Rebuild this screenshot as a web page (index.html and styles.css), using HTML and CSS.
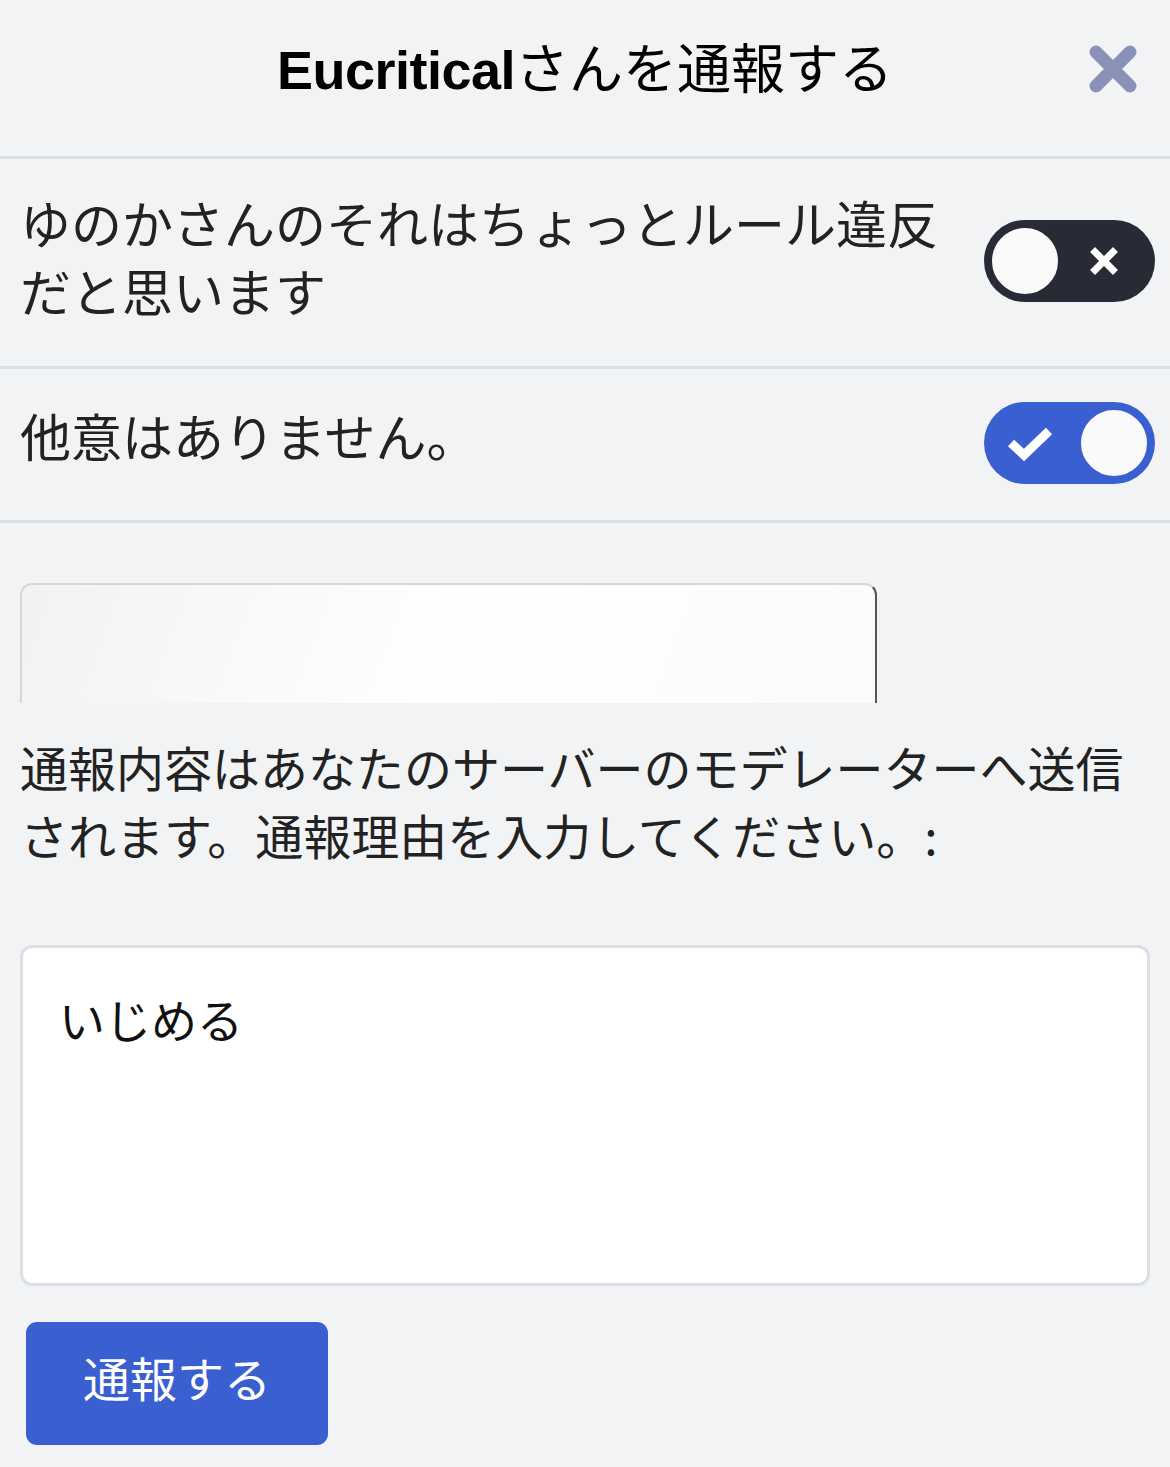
FILE: index.html
```html
<!DOCTYPE html>
<html lang="ja">
<head>
<meta charset="utf-8">
<title>通報</title>
<link rel="stylesheet" href="styles.css">
</head>
<body>
  <div class="report-modal">
    <div class="modal-header">
      <span></span>
      <h1 class="modal-title"><b>Eucritical</b>さんを通報する</h1>
      <button type="button" class="close" aria-label="閉じる">
        <svg width="50" height="50" viewBox="0 0 50 50"><path d="M8 8 L42 42 M42 8 L8 42" stroke="#8a91b6" stroke-width="13" stroke-linecap="round"/></svg>
      </button>
    </div>

    <div class="rule-row">
      <div class="rule-text">ゆのかさんのそれはちょっとルール違反だと思います</div>
      <span class="toggle toggle-off">
        <span class="knob"></span>
        <svg class="toggle-icon" width="34" height="34" viewBox="0 0 34 34"><path d="M8 8 L26 26 M26 8 L8 26" stroke="#fff" stroke-width="7" stroke-linecap="square"/></svg>
      </span>
    </div>

    <div class="rule-row rule-row-short">
      <div class="rule-text">他意はありません。</div>
      <span class="toggle toggle-on">
        <svg class="toggle-icon" width="48" height="40" viewBox="0 0 48 40"><path d="M5 20 L18 32 L43 8" stroke="#fff" stroke-width="9" fill="none" stroke-linejoin="miter"/></svg>
        <span class="knob"></span>
      </span>
    </div>

    <div class="modal-body">
      <div class="status-preview"></div>
      <p class="report-hint">通報内容はあなたのサーバーのモデレーターへ送信されます。通報理由を入力してください。:</p>
      <div class="comment-box">いじめる</div>
      <button type="button" class="btn-report">通報する</button>
    </div>
  </div>
</body>
</html>
```

FILE: styles.css
```css
body { margin: 0; background: #f2f3f5; font-family: "Noto Sans CJK JP", "Liberation Sans", sans-serif; color: #1a1a1a; }
.report-modal { width: 1170px; }

.modal-header { height: 156px; display: grid; grid-template-columns: 1fr auto 1fr; align-items: center; border-bottom: 3px solid #d9dfe4; }
.modal-title { margin: 0; font-size: 54px; font-weight: 400; line-height: 70px; padding-bottom: 20px; color: #000; }
.modal-title b { font-family: "Liberation Sans", Arial, sans-serif; font-weight: 700; font-size: 54px; letter-spacing: -0.5px; }
.close { justify-self: end; margin-right: 32px; margin-bottom: 18px; background: none; border: 0; padding: 0; width: 50px; height: 50px; display: flex; }

.rule-row { display: flex; align-items: flex-start; justify-content: space-between; padding: 29px 15px 42px 20px; border-bottom: 3px solid #d9dfe4; }
.rule-row .toggle { margin-top: 32px; }
.rule-row-short { padding: 32px 15px 36px 20px; }
.rule-row-short .toggle { margin-top: 1px; }
.rule-text { width: 930px; font-size: 51px; line-height: 68px; color: #222; }

.toggle { width: 171px; height: 82px; border-radius: 41px; display: flex; align-items: center; justify-content: space-between; box-sizing: border-box; padding: 0 5px; flex-shrink: 0; }
.toggle-off { background: #282a36; padding-right: 34px; }
.toggle-on { background: #3a5fd0; padding-left: 22px; }
.knob { width: 72px; height: 72px; border-radius: 50%; background: #fafafa; box-sizing: border-box; }
.toggle-off .knob { border: 3px solid #282a36; }
.toggle-on .knob { border: 3px solid #3a5fd0; }

.modal-body { padding: 60px 20px 0 20px; }
.status-preview { width: 857px; height: 120px; box-sizing: border-box; border: 2px solid #d4d6d8; border-right-color: #555; border-bottom: 0; border-radius: 12px 12px 0 0; background: linear-gradient(110deg, #f3f1f1 0%, #fbf9f9 30%, #ffffff 50%, #fbfbfb 100%); }
.report-hint { margin: 29px 0 0 0; padding-bottom: 4px; font-size: 48px; line-height: 68px; color: #222; }
.comment-box { margin-top: 73px; height: 341px; box-sizing: border-box; background: #fff; border: 3px solid #dce0e5; border-radius: 12px; padding: 36px 36px; font-size: 46px; line-height: 68px; color: #111; }
.btn-report { margin: 36px 0 0 6px; width: 302px; height: 123px; border: 0; border-radius: 11px; background: #3a5fd0; color: #fff; font-family: "Noto Sans CJK JP", sans-serif; font-size: 47px; padding: 0 0 14px 0; }
```
